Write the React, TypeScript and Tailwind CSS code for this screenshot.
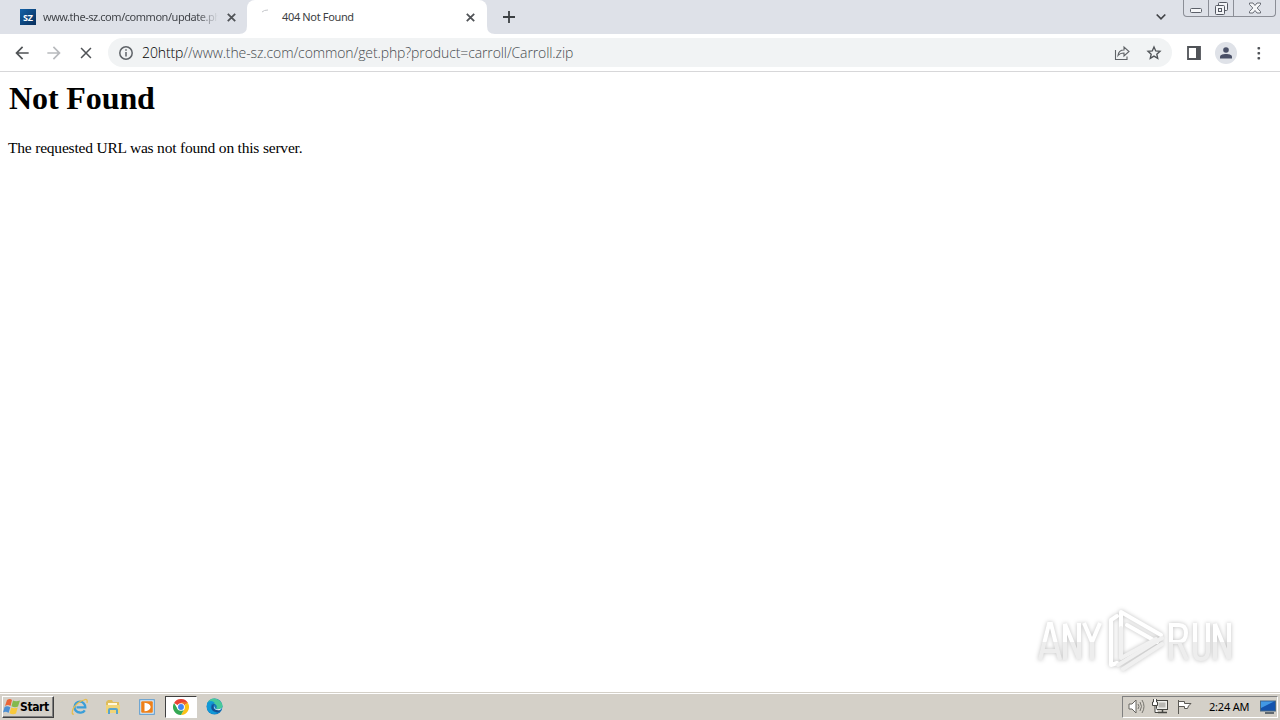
import type { ReactNode } from 'react';

function Icon({ size = 16, box = '0 0 24 24', children, className = '' }: { size?: number; box?: string; children: ReactNode; className?: string }) {
  return (
    <svg width={size} height={size} viewBox={box} fill="none" className={'block shrink-0 ' + className}>
      {children}
    </svg>
  );
}

function Cross({ size = 9, width = 1.8 }: { size?: number; width?: number }) {
  return (
    <Icon size={size} box="0 0 9 9">
      <path d="M.8 .8L8.2 8.2M8.2 .8L.8 8.2" stroke="#505357" strokeWidth={width} />
    </Icon>
  );
}

function TabStrip() {
  return (
    <div className="flex h-[34px] bg-[#dee1e8] text-[11px] leading-[34px]">
      <div className="flex w-[247px] items-center rounded-br-lg pl-5">
        <div className="flex h-4 w-4 items-center justify-center bg-gradient-to-br from-[#1262a8] to-[#092f5c] text-[9px] font-bold leading-none text-white">SZ</div>
        <div className="ml-[7px] w-[175px] overflow-hidden whitespace-nowrap bg-gradient-to-r from-[#3c3f44] from-88% to-[#dee1e8] bg-clip-text tracking-[-0.46px] text-transparent">www.the-sz.com/common/update.php</div>
        <div className="ml-[9px]"><Cross /></div>
      </div>
      <div className="relative flex w-[240px] items-center rounded-t-lg bg-white text-[#3c4043]">
        <svg width="8" height="8" viewBox="0 0 8 8" className="absolute -left-2 bottom-0"><path d="M0 8H8V0Q8 8 0 8" fill="white" /></svg>
        <svg width="8" height="8" viewBox="0 0 8 8" className="absolute -right-2 bottom-0"><path d="M8 8H0V0Q0 8 8 8" fill="white" /></svg>
        <svg width="8" height="4" viewBox="0 0 8 4" fill="none" className="ml-[14px] mb-[13px]"><path d="M1 3Q3 1 7 1" stroke="#c4c6ca" /></svg>
        <span className="ml-[13px] w-[184px] tracking-[-0.35px]">404 Not Found</span>
        <Cross />
      </div>
      <div className="flex w-[44px] items-center justify-center">
        <Icon size={12} box="0 0 12 12"><path d="M6 0V12M0 6H12" stroke="#3c4043" strokeWidth="1.8" /></Icon>
      </div>
      <div className="flex flex-1 justify-end">
        <div className="mr-[17px] flex items-center">
          <Icon size={10} box="0 0 10 10"><path d="M.7 2.5L5 6.8L9.3 2.5" stroke="#414347" strokeWidth="1.7" /></Icon>
        </div>
        <div className="mr-[4px] flex h-[17px] w-[93px] rounded-b-[4px] border border-t-0 border-[#8b8e96]">
          <div className="flex w-[25px] items-end justify-center border-r border-[#8b8e96] pb-[3px]">
            <Icon size={12} box="0 0 12 12"><rect x=".5" y="7.5" width="11" height="4" rx="1" fill="#f5f6f8" stroke="#5c6069" /></Icon>
          </div>
          <div className="flex w-[25px] items-center justify-center border-r border-[#8b8e96]">
            <Icon size={13} box="0 0 13 13"><g fill="#f3f4f7" stroke="#555962"><rect x="3.5" y=".5" width="9" height="8" rx="1" /><rect x=".5" y="3.5" width="9" height="9" rx="1" /><rect x="3.5" y="6.5" width="3" height="3" /></g></Icon>
          </div>
          <div className="flex flex-1 items-center justify-center">
            <Icon size={12} box="0 0 12 12"><path d="M.5 1H4L6 3.5L8 1H11.5V2.5L8.2 6L11.5 9.5V11H8L6 8.5L4 11H.5V9.5L3.8 6L.5 2.5Z" fill="#f5f6f8" stroke="#5c6069" strokeWidth=".9" /></Icon>
          </div>
        </div>
      </div>
    </div>
  );
}

function Toolbar() {
  return (
    <div className="flex h-[38px] items-center border-b border-[#d7d7d9] bg-white">
      <Icon size={20} className="ml-[12px]"><path d="M20 11H7.8l5.6-5.6L12 4l-8 8 8 8 1.4-1.4L7.8 13H20z" fill="#505356" /></Icon>
      <Icon size={20} className="ml-[12px]"><path d="M4 11h12.2l-5.6-5.6L12 4l8 8-8 8-1.4-1.4 5.6-5.6H4z" fill="#b8babd" /></Icon>
      <div className="ml-[16px]"><Cross size={12} width={1.15} /></div>
      <div className="ml-[16px] flex h-[29px] w-[1064px] items-center rounded-full bg-[#f1f3f4]">
        <Icon size={16} className="ml-[10px]" box="0 0 16 16"><circle cx="8" cy="8" r="6.2" stroke="#5f6368" strokeWidth="1.5" /><path d="M8 7V11.5M8 4.3V5.8" stroke="#5f6368" strokeWidth="1.5" /></Icon>
        <div className="ml-[8px] w-[965px] whitespace-nowrap font-['Open_Sans','Noto_Sans',sans-serif] text-[14px] font-light leading-5 tracking-[-0.11px] text-[#484c50]"><span className="text-black">20http</span>//www.the-sz.com/common/get.php?product=carroll/Carroll.zip</div>
        <Icon size={16} className="ml-[7px]" box="0 0 16 16"><path d="M1.5 5V14.5H13V11.5M4 10.5C4.5 6.5 7 5 10 5V2L15 6.5L10 11V8C7.5 8 5.5 8.6 4 10.5Z" stroke="#606367" strokeWidth="1.1" /></Icon>
        <Icon size={16} className="ml-[16px]"><path d="M12 3L14.6 8.9L21 9.5L16.2 13.8L17.6 20L12 16.7L6.4 20L7.8 13.8L3 9.5L9.4 8.9Z" stroke="#505458" strokeWidth="2" /></Icon>
      </div>
      <Icon size={14} className="ml-[15px]" box="0 0 14 14"><path d="M1 1H13V13H1Z" stroke="#505358" strokeWidth="1.8" /><path d="M9 1H13V13H9Z" fill="#505358" /></Icon>
      <div className="ml-[14px] flex h-[22px] w-[22px] items-center justify-center rounded-full bg-[#dfe2e8]">
        <Icon size={14} box="0 0 14 14"><circle cx="7" cy="4" r="2.8" fill="#4a5067" /><path d="M1 12.5V11C1 8.8 4 8 7 8S13 8.8 13 11V12.5Z" fill="#4a5067" /></Icon>
      </div>
      <Icon size={16} className="ml-[14px]" box="0 0 16 16"><g fill="#505358"><rect x="6.5" y="2" width="2.6" height="2.6" rx=".8" /><rect x="6.5" y="7" width="2.6" height="2.6" rx=".8" /><rect x="6.5" y="12" width="2.6" height="2.6" rx=".8" /></g></Icon>
    </div>
  );
}

function Watermark() {
  return (
    <svg width="204" height="70" viewBox="0 0 204 70" fill="none" className="absolute right-[42px] top-[606px] drop-shadow-[0_0_2px_rgba(0,0,0,0.25)]">
      <defs>
        <linearGradient id="shade" x1="0" y1="15" x2="0" y2="56" gradientUnits="userSpaceOnUse">
          <stop offset=".5" stopColor="#ffffff" /><stop offset=".51" stopColor="#ededed" />
        </linearGradient>
      </defs>
      <g stroke="url(#shade)" strokeWidth="4">
        <path d="M6 54L15 18H17L26 54M8 45H24" />
        <path d="M31 54V18L45 53V17" />
        <path d="M50 17L58 36L66 17M58 36V54" />
        <path d="M137 54V19H145Q152 19 152 27T145 36H137M145 36L153 54" />
        <path d="M161 17V46Q161 53 167 53T174 46V17" />
        <path d="M181 54V18L195 53V17" />
      </g>
      <g stroke="#fff" strokeWidth="4" strokeLinejoin="round" strokeLinecap="round">
        <path d="M83 10L77 14V59L83 57" />
        <path d="M87 50V6L127 29" />
        <path d="M93 19L123 36" />
        <path d="M87 22V52L122 33" stroke="#f1f1f1" />
        <path d="M84 59L128 32" stroke="#f0f0f0" />
        <path d="M89 63L128 38" stroke="#f0f0f0" />
      </g>
    </svg>
  );
}

function Taskbar() {
  return (
    <div className="flex h-[28px] items-center border-t border-[#d4d0c8] bg-[#d4d0c8] shadow-[inset_0_1px_0_white]">
      <div className="ml-[2px] flex h-[22px] w-[52px] items-center border border-white border-b-[#404040] border-r-[#404040] shadow-[inset_-1px_-1px_0_#808080]">
        <Icon size={17} box="0 0 17 17">
          <path d="M4 2Q7 0 9 2L7.5 8Q5 6 2 8Z" fill="#ea6537" />
          <path d="M10 2.5Q13 4 17 2.5L15 8.5Q12 10 8.5 8.3Z" fill="#83b94d" />
          <path d="M1.6 9Q4 7.5 7.3 9.3L5.5 15Q3 13 0 14.5Z" fill="#4c8fd3" />
          <path d="M8.3 9.5Q11 11 14.7 9.5L13 15.5Q10 17 6.5 15.2Z" fill="#f8c93b" />
        </Icon>
        <b className="font-['DejaVu_Sans_Condensed','DejaVu_Sans',sans-serif] text-[12px] leading-none tracking-[-0.4px] text-black">Start</b>
      </div>
      <div className="ml-[17px] flex items-center">
        <Icon size={18} box="0 0 18 18">
          <path d="M13.8 12.3Q12 15.2 8.8 14.5A5.4 5.4 0 1 1 14.3 9.3H5.5" stroke="#3b9ed8" strokeWidth="2.3" />
          <path d="M3 16Q0 17 2 11Q6 4 13 2Q17 0 16 5" stroke="#e7bd4d" strokeWidth="1.3" />
        </Icon>
        <Icon size={16} className="ml-[16px]" box="0 0 16 16">
          <path d="M1 3L3 1H7L8 3H14V14H1Z" fill="#dfbd5c" /><path d="M3 4H12V6H3Z" fill="#fff8dc" /><path d="M1 6H15V14H1Z" fill="#f0d478" /><path d="M3 15V11Q3 9 5 9H11Q13 9 13 11V15H11V11H5V15Z" fill="#58a4cc" />
        </Icon>
        <Icon size={16} className="ml-[18px]" box="0 0 16 16">
          <rect x=".7" y=".7" width="14.6" height="14.6" fill="#dceaf5" stroke="#5799d0" /><rect x="2.2" y="2.2" width="11.6" height="11.6" rx="1" fill="#ee8019" /><path d="M5.5 3.7Q11 4 11.7 8Q11 12 5.5 12.3Z" fill="white" />
        </Icon>
      </div>
      <div className="ml-[10px] flex h-[22px] w-[32px] items-center justify-center border border-[#404040] border-b-white border-r-white bg-white">
        <Icon size={16} box="0 0 24 24">
          <path d="M12 12L1.6 6A12 12 0 0 1 22.4 6Z" fill="#e94335" />
          <path d="M12 12L22.4 6A12 12 0 0 1 12 24L17 15Z" fill="#fbc116" />
          <path d="M12 12L17 15L12 24A12 12 0 0 1 1.6 6L7 15Z" fill="#34a853" />
          <path d="M12 6H22.4" stroke="#fbc116" strokeWidth="1" />
          <circle cx="12" cy="12" r="5.8" fill="white" /><circle cx="12" cy="12" r="4.4" fill="#4285f4" />
        </Icon>
      </div>
      <Icon size={17} className="ml-[9px]" box="0 0 17 17">
        <circle cx="8.5" cy="8.5" r="8" fill="#1278bf" />
        <path d="M1 6Q4 -1 11 1Q17 4 16.5 9Q15 12 10 10.5Q12 8 9 6Q5 3 1 6Z" fill="#47c99b" />
        <path d="M1 5Q5 1 9 5Q4 5 5 10Q6 14 12 15Q4 18 1 11Z" fill="#1199d7" />
        <path d="M9 6Q6 8 8 11Q10 13 15 12Q13 15 10 14Q5 13 5.5 9Q6 6 9 6Z" fill="#174f91" />
        <path d="M9 7Q8 10 10 11Q12 12 16 10L14 12Q10 13 8 10Z" fill="#e8f3f5" />
      </Icon>
      <div className="ml-auto mr-[2px] flex h-[22px] w-[156px] items-center border border-[#808080] border-b-white border-r-white">
        <Icon size={18} className="ml-[5px]" box="0 0 18 18"><path d="M1 6H4L8 2V15L4 11H1Z" fill="#fff" stroke="#66645f" /><path d="M10 6Q12 8.5 10 11M12 4Q15 8.5 12 13M14 2Q18 8.5 14 15" stroke="#77756f" /></Icon>
        <Icon size={17} className="ml-[6px]" box="0 0 17 17"><rect x="4.5" y="2.5" width="11" height="9" fill="#eeeeeb" stroke="#454541" /><rect x="6.5" y="4.5" width="7" height="5" fill="#b8b7b3" /><path d="M6 14.5H15M10.5 12V14" stroke="#454541" strokeWidth="1.5" /><path d="M1.5 1V4H.5V7.5H5.5V4H4.5V1M3 7.5V14.5H6" fill="white" stroke="#454541" /></Icon>
        <Icon size={16} className="ml-[7px]" box="0 0 16 16"><path d="M2.5 1V15M3 2.5H8.5V4.5H15L12.5 7L11.5 9.5H8.5V7.5H3" fill="white" stroke="#5c5a55" /></Icon>
        <span className="ml-[17px] w-[46px] whitespace-nowrap text-[11px] leading-none tracking-[-0.2px] text-black">2:24 AM</span>
        <Icon size={16} className="ml-[5px]" box="0 0 16 16"><rect x=".5" y="2" width="15" height="10" fill="#1453ad" stroke="#496983" /><path d="M1 2.5H14L1 9Z" fill="#4298e4" /><path d="M5 14H14" stroke="#616a71" strokeWidth="2" /></Icon>
      </div>
    </div>
  );
}

export default function App() {
  return (
    <div className="relative flex h-[720px] w-[1280px] flex-col overflow-hidden bg-white font-['Noto_Sans','Liberation_Sans',sans-serif]">
      <TabStrip />
      <Toolbar />
      <main className="flex-1 px-2 pt-[8px] font-['Liberation_Serif',serif] text-black">
        <h1 className="pl-px text-[32px] font-bold leading-[37px] tracking-[-0.1px]">Not Found</h1>
        <p className="mt-[21px] text-[15.5px] leading-[20px] tracking-[-0.2px]">The requested URL was not found on this server.</p>
      </main>
      <Taskbar />
      <Watermark />
    </div>
  );
}
